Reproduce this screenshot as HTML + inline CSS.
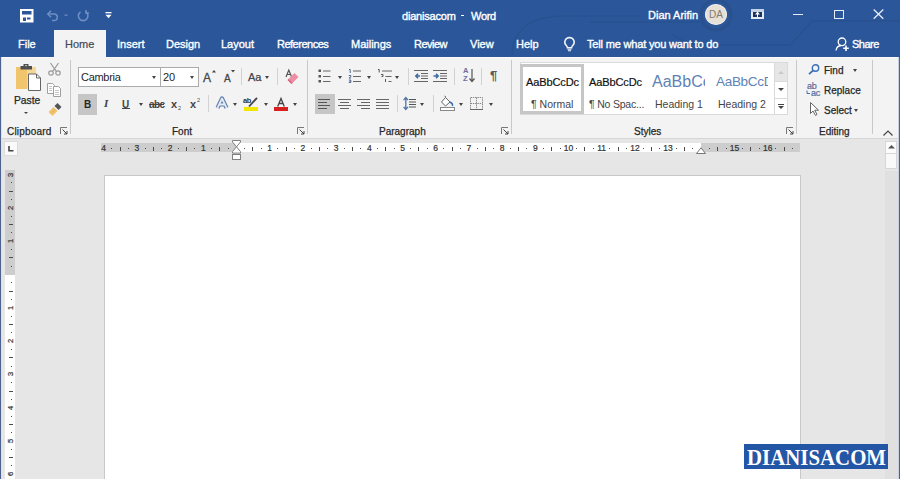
<!DOCTYPE html>
<html><head><meta charset="utf-8">
<style>
*{margin:0;padding:0;box-sizing:border-box}
html,body{width:900px;height:479px;overflow:hidden;background:#E6E6E6;font-family:"Liberation Sans",sans-serif}
.a{position:absolute;white-space:nowrap}
#top{position:absolute;left:0;top:0;width:900px;height:57px;background:#2B579A;overflow:hidden}
.tw{color:#fff;font-size:11px;-webkit-text-stroke:0.35px #fff}
.tab{color:#fff;font-size:11px;top:38px;-webkit-text-stroke:0.35px #fff}
#ribbon{position:absolute;left:0;top:57px;width:900px;height:82px;background:#F3F3F3;border-bottom:1px solid #D6D6D6}
.rt{color:#262626;font-size:10px;-webkit-text-stroke:0.25px #262626}
.lbl{color:#262626;font-size:10px;top:126px;-webkit-text-stroke:0.25px #262626}
.vsep{position:absolute;width:1px;background:#D2D2D2}
.gsep{position:absolute;width:1px;background:#C8C8C8;top:60px;height:74px}
.rn{font-size:8.5px;color:#333;-webkit-text-stroke:0.2px #333;text-align:center;line-height:10px}
.dd{position:absolute;width:0;height:0;border-left:2px solid transparent;border-right:2px solid transparent;border-top:2px solid #444}
svg{position:absolute;overflow:visible}
</style></head><body>
<div id="top">
  <!-- circuit pattern -->
  <svg style="left:0;top:0" width="900" height="57">
    <g fill="none" stroke="#28528F" stroke-width="1.5">
      <path d="M900 21 L812 21 L790 45 L700 45 C690 45 680 40 672 34"/>
      <path d="M512 57 C512 30 530 16 565 16 L640 16"/>
      <path d="M590 22 L700 22"/>
    </g>
    <circle cx="716" cy="15" r="15" fill="none" stroke="#28518D" stroke-width="3"/>
  </svg>
  <!-- QAT -->
  <svg style="left:20px;top:9px" width="14" height="14" viewBox="0 0 14 14">
    <rect x="0" y="0" width="13.5" height="13.5" fill="#fff"/>
    <rect x="2" y="2" width="9.5" height="3.5" fill="#2B579A"/>
    <rect x="3" y="8.5" width="3" height="3.5" fill="#2B579A"/>
    <rect x="7" y="8.5" width="3.5" height="2" fill="#2B579A"/>
  </svg>
  <svg style="left:46px;top:10px" width="24" height="12" viewBox="0 0 24 12">
    <path d="M2 4h6a3.3 3.3 0 0 1 0 6.6H6" fill="none" stroke="#6F8FC6" stroke-width="1.5"/>
    <path d="M5 0.8L1.8 4L5 7.2" fill="none" stroke="#6F8FC6" stroke-width="1.5"/>
    <rect x="18.5" y="4.5" width="3" height="1.2" fill="#6F8FC6"/>
  </svg>
  <svg style="left:77px;top:10px" width="13" height="12" viewBox="0 0 13 12">
    <path d="M8.8 1.8A4.8 4.8 0 1 1 3.5 1.8" fill="none" stroke="#6F8FC6" stroke-width="1.6"/>
    <path d="M9 0v3h3" fill="none" stroke="#6F8FC6" stroke-width="1.5"/>
  </svg>
  <svg style="left:105px;top:12px" width="7" height="7" viewBox="0 0 7 7">
    <rect x="0.5" y="0" width="6" height="1.3" fill="#fff"/>
    <path d="M0.5 2.8h6l-3 3.5z" fill="#fff"/>
  </svg>
  <div class="a tw" style="left:402px;top:10px;letter-spacing:-0.2px">dianisacom</div>
  <div class="a" style="left:461px;top:15px;width:3px;height:1px;background:#fff"></div>
  <div class="a tw" style="left:471px;top:10px;letter-spacing:-0.3px">Word</div>
  <div class="a tw" style="left:648px;top:9px">Dian Arifin</div>
  <div class="a" style="left:705px;top:4px;width:22px;height:21px;border-radius:50%;background:#E6E0D7;border:1px solid #F2F0EC;color:#857B6E;font-size:10px;line-height:19px;text-align:center">DA</div>
  <svg style="left:751px;top:9px" width="13" height="10" viewBox="0 0 13 10">
    <rect x="0" y="0" width="13" height="10" fill="#E4EBF5"/>
    <rect x="0" y="0" width="13" height="3" fill="#C5D2E6"/>
    <rect x="2" y="3" width="9" height="5" fill="#1C335F"/>
    <path d="M6.5 2.5L4 5.5h5z" fill="#fff"/><rect x="6" y="5" width="1" height="3" fill="#fff"/>
  </svg>
  <div class="a" style="left:793px;top:14px;width:10px;height:1px;background:#E6EDF7"></div>
  <div class="a" style="left:834px;top:9.5px;width:9.5px;height:9.5px;border:1.3px solid #E6EDF7"></div>
  <svg style="left:873px;top:9px" width="11" height="10" viewBox="0 0 11 10">
    <path d="M0.7 0.5L10.3 9.8M10.3 0.5L0.7 9.8" stroke="#E6EDF7" stroke-width="1.3"/>
  </svg>
  <!-- tabs -->
  <div class="a" style="left:54px;top:30px;width:52px;height:27px;background:#F3F3F3"></div>
  <div class="a tab" style="left:18px">File</div>
  <div class="a tab" style="left:65px;color:#3F4756;-webkit-text-stroke:0.2px #3F4756">Home</div>
  <div class="a tab" style="left:117px">Insert</div>
  <div class="a tab" style="left:166px">Design</div>
  <div class="a tab" style="left:221px">Layout</div>
  <div class="a tab" style="left:277px;letter-spacing:-0.5px">References</div>
  <div class="a tab" style="left:351px">Mailings</div>
  <div class="a tab" style="left:414px;letter-spacing:-0.5px">Review</div>
  <div class="a tab" style="left:470px">View</div>
  <div class="a tab" style="left:516px">Help</div>
  <svg style="left:563px;top:36px" width="13" height="16" viewBox="0 0 13 16">
    <path d="M6.5 1.5a4.7 4.7 0 0 0-3 8.3c.6.6.9 1.2.9 2h4.2c0-.8.3-1.4.9-2a4.7 4.7 0 0 0-3-8.3z" fill="none" stroke="#F0F4FA" stroke-width="1.5"/>
    <path d="M4.5 13.3h4M5 14.8h3" stroke="#F0F4FA" stroke-width="1.1"/>
  </svg>
  <div class="a tab" style="left:587px;letter-spacing:-0.17px">Tell me what you want to do</div>
  <svg style="left:835px;top:37px" width="15" height="15" viewBox="0 0 15 15">
    <circle cx="7" cy="4.8" r="3.8" fill="none" stroke="#fff" stroke-width="1.3"/>
    <path d="M1 13.5c.5-3 2.5-4.8 5-5" fill="none" stroke="#fff" stroke-width="1.3"/>
    <path d="M11 8.5v5.5M8.2 11.2h5.6" stroke="#fff" stroke-width="1.6"/>
  </svg>
  <div class="a tab" style="left:852px;letter-spacing:-0.5px">Share</div>
</div>

<div id="ribbon"></div>
<div class="a" style="left:0;top:57px;width:54px;height:1px;background:#FBFBFB"></div>
<div class="a" style="left:106px;top:57px;width:794px;height:1px;background:#FBFBFB"></div>

<!-- RIBBON CONTENT -->
<!-- Clipboard group -->
<svg style="left:16px;top:63px" width="26" height="29" viewBox="0 0 26 29">
  <rect x="0" y="4" width="19.5" height="22" fill="#F1C56C"/>
  <rect x="11" y="4" width="8.5" height="22" fill="#F5D699"/>
  <rect x="4.5" y="3" width="11.5" height="3.5" fill="#505050"/>
  <rect x="7.5" y="1" width="5" height="3" fill="#505050"/>
  <rect x="9.3" y="2" width="1.5" height="1.2" fill="#ddd"/>
  <path d="M12.5 11h8l4 4v12.5h-12z" fill="#fff" stroke="#666" stroke-width="1"/>
  <path d="M20.5 11v4h4" fill="none" stroke="#666" stroke-width="1"/>
</svg>
<div class="a rt" style="left:14px;top:95px;font-size:10.3px">Paste</div>
<div class="dd" style="left:24px;top:112px;border-width:2px 2px 0 2px"></div>
<svg style="left:48px;top:62px" width="13" height="14" viewBox="0 0 13 14">
  <path d="M2.5 1L8.3 9.3M10.5 1L4.7 9.3" stroke="#9A9A9A" stroke-width="1.2" fill="none"/>
  <circle cx="3" cy="11" r="2.2" fill="none" stroke="#9A9A9A" stroke-width="1.2"/>
  <circle cx="10" cy="11" r="2.2" fill="none" stroke="#9A9A9A" stroke-width="1.2"/>
</svg>
<svg style="left:47px;top:83px" width="14" height="14" viewBox="0 0 14 14">
  <path d="M0.5 0.5h5l2 2v8h-7z" fill="#fff" stroke="#A0A0A0" stroke-width="1"/>
  <path d="M6.5 3.5h5l2 2v8h-7z" fill="#fff" stroke="#A0A0A0" stroke-width="1"/>
  <path d="M2 3.5h3M2 5.5h3M2 7.5h3M8 7.5h4M8 9.5h4M8 11.5h4" stroke="#B8B8B8" stroke-width="0.8"/>
</svg>
<svg style="left:48px;top:103px" width="14" height="13" viewBox="0 0 14 13">
  <path d="M0.5 9L5.5 4L9.5 8L4.5 13z" fill="#EFC26B"/>
  <path d="M4 9.5L7 6.5" stroke="#D9A94F" stroke-width="0.8"/>
  <path d="M6.5 3L9.5 0L13.5 4L10.5 7z" fill="#555"/>
</svg>
<div class="a lbl" style="left:7px;letter-spacing:0.2px">Clipboard</div>
<svg style="left:60px;top:127px" width="8" height="8" viewBox="0 0 8 8">
  <path d="M0.5 7V0.5H7" fill="none" stroke="#777" stroke-width="1"/>
  <path d="M2.5 2.5L7 7M7 4v3H4" fill="none" stroke="#444" stroke-width="1"/>
</svg>
<div class="gsep" style="left:70px"></div>
<!-- Font group -->
<div class="a" style="left:78px;top:67px;width:121px;height:20px;background:#fff;border:1px solid #ABABAB"></div>
<div class="a" style="left:160px;top:67px;width:1px;height:20px;background:#ABABAB"></div>
<div class="a" style="left:81px;top:71px;font-size:11px;color:#262626;letter-spacing:-0.3px">Cambria</div>
<div class="dd" style="left:152px;top:76px;border-width:3px 2px 0 2px"></div>
<div class="a" style="left:163px;top:71px;font-size:11px;color:#262626">20</div>
<div class="dd" style="left:190px;top:76px;border-width:3px 2px 0 2px"></div>
<!-- grow/shrink -->
<div class="a" style="left:203px;top:71px;font-size:12px;color:#444;-webkit-text-stroke:0.3px #444">A</div>
<svg style="left:212px;top:70px" width="4" height="3"><path d="M0 2.5L2 0L4 2.5z" fill="#444"/></svg>
<div class="a" style="left:224px;top:73px;font-size:10px;color:#444;-webkit-text-stroke:0.3px #444">A</div>
<svg style="left:231px;top:70px" width="4" height="3"><path d="M0 0L2 2.5L4 0z" fill="#444"/></svg>
<div class="vsep" style="left:241px;top:68px;height:17px"></div>
<div class="a" style="left:248px;top:71px;font-size:11px;color:#444;-webkit-text-stroke:0.25px #444">Aa</div>
<div class="dd" style="left:265px;top:76px;border-width:3px 2px 0 2px"></div>
<div class="vsep" style="left:277px;top:68px;height:17px"></div>
<svg style="left:285px;top:69px" width="15" height="14" viewBox="0 0 15 14">
  <path d="M1 8L3.8 1L6.6 8M1.9 5.5h3.8" fill="none" stroke="#555" stroke-width="1.2"/>
  <path d="M3 10.5L9.5 4L13.5 8L7 14.5z" fill="#EC8FA2"/>
  <path d="M3 10.5L7 14.5" stroke="#D9587A" stroke-width="1.5"/>
</svg>
<!-- row 2 -->
<div class="a" style="left:78px;top:94px;width:19px;height:21px;background:#C6C6C6"></div>
<div class="a" style="left:84px;top:99px;font-size:10px;font-weight:bold;color:#262626">B</div>
<div class="a" style="left:104px;top:97px;font-size:11px;font-style:italic;font-weight:bold;color:#444;font-family:'Liberation Serif',serif">I</div>
<div class="a" style="left:122px;top:99px;font-size:10px;font-weight:bold;color:#444">U</div>
<div class="a" style="left:122px;top:108px;width:8px;height:1px;background:#444"></div>
<div class="dd" style="left:139px;top:103px;border-width:3px 2px 0 2px"></div>
<div class="a" style="left:149px;top:99px;font-size:10px;color:#444;letter-spacing:-0.6px;font-weight:bold">abc</div>
<div class="a" style="left:149px;top:104px;width:15px;height:1px;background:#444"></div>
<div class="a" style="left:171px;top:98px;font-size:11px;font-weight:bold;color:#444">x</div>
<div class="a" style="left:178px;top:105px;font-size:5.5px;color:#444">2</div>
<div class="a" style="left:190px;top:98px;font-size:11px;font-weight:bold;color:#444">x</div>
<div class="a" style="left:197px;top:97px;font-size:5.5px;color:#444">2</div>
<div class="vsep" style="left:208px;top:95px;height:17px"></div>
<svg style="left:216px;top:97px" width="12" height="12" viewBox="0 0 12 12">
  <path d="M1.5 10.8L6 1.5L10.5 10.8M3.4 7.5h5.2" fill="none" stroke="#6482AE" stroke-width="4.2" stroke-linejoin="round"/>
  <path d="M1.5 10.8L6 1.5L10.5 10.8M3.4 7.5h5.2" fill="none" stroke="#E4EBF5" stroke-width="1.8" stroke-linejoin="round"/>
</svg>
<div class="dd" style="left:233px;top:103px;border-width:3px 2px 0 2px"></div>
<div class="a" style="left:243px;top:96px;font-size:7.5px;color:#333;font-weight:bold;letter-spacing:-0.3px">ab</div>
<svg style="left:247px;top:97px" width="11" height="10" viewBox="0 0 11 10">
  <path d="M10 0.8L2 9.5" stroke="#444" stroke-width="1.8"/>
</svg>
<div class="a" style="left:244px;top:107px;width:14px;height:4px;background:#F2E600"></div>
<div class="dd" style="left:264px;top:103px;border-width:3px 2px 0 2px"></div>
<svg style="left:277px;top:98px" width="8" height="9" viewBox="0 0 8 9">
  <path d="M0.7 8.5L4 0.5L7.3 8.5M2 5.5h4" fill="none" stroke="#444" stroke-width="1.3"/>
</svg>
<div class="a" style="left:274px;top:107px;width:14px;height:4px;background:#D8201F"></div>
<div class="dd" style="left:293px;top:103px;border-width:3px 2px 0 2px"></div>
<div class="a lbl" style="left:172px">Font</div>
<svg style="left:297px;top:127px" width="8" height="8" viewBox="0 0 8 8">
  <path d="M0.5 7V0.5H7" fill="none" stroke="#777" stroke-width="1"/>
  <path d="M2.5 2.5L7 7M7 4v3H4" fill="none" stroke="#444" stroke-width="1"/>
</svg>
<div class="gsep" style="left:307px"></div>
<!-- Paragraph group -->
<svg style="left:318px;top:69px" width="14" height="14" viewBox="0 0 14 14">
  <g fill="#555"><rect x="0.5" y="0.5" width="2.5" height="2.5"/><rect x="0.5" y="6" width="2.5" height="2.5"/><rect x="0.5" y="11" width="2.5" height="2.5"/></g>
  <g stroke="#666" stroke-width="1"><path d="M5 2h7.5M5 7.5h7.5M5 12.5h7.5"/></g>
</svg>
<div class="dd" style="left:338px;top:76px;border-width:3px 2px 0 2px"></div>
<svg style="left:348px;top:68px" width="14" height="15" viewBox="0 0 14 15">
  <g stroke="#4D6890" stroke-width="1" fill="none"><path d="M1 1.5h1.2v3.5"/><path d="M0.8 7.5h2v1.3l-1.8 1.2h2"/><path d="M0.8 12h2v1.2h-1.5M2.8 13.2v1.3H0.8"/></g>
  <g stroke="#666" stroke-width="1"><path d="M5 3h8M5 8.5h8M5 13.5h8"/></g>
</svg>
<div class="dd" style="left:367px;top:76px;border-width:3px 2px 0 2px"></div>
<svg style="left:377px;top:68px" width="15" height="15" viewBox="0 0 15 15">
  <g stroke="#555" stroke-width="1" fill="none"><path d="M1 1.5h1.2v3"/><path d="M4 6.5h2v2H4.5"/><path d="M8.5 11v3"/></g>
  <g stroke="#666" stroke-width="1"><path d="M5 3h10M8.5 8.5h6M11.5 13.5h3"/></g>
</svg>
<div class="dd" style="left:395px;top:76px;border-width:3px 2px 0 2px"></div>
<div class="vsep" style="left:408px;top:68px;height:17px"></div>
<svg style="left:414px;top:69px" width="15" height="13" viewBox="0 0 15 13">
  <g stroke="#666" stroke-width="1"><path d="M0 1.5h14M7 4.5h7M7 7h7M7 9.5h7M0 12.5h14"/></g>
  <path d="M6 7H1.8M4 4.8L1.8 7L4 9.2" fill="none" stroke="#3F6A9E" stroke-width="1.5"/>
</svg>
<svg style="left:433px;top:69px" width="15" height="13" viewBox="0 0 15 13">
  <g stroke="#666" stroke-width="1"><path d="M0 1.5h14M7 4.5h7M7 7h7M7 9.5h7M0 12.5h14"/></g>
  <path d="M0.5 7H5M3 4.8L5.2 7L3 9.2" fill="none" stroke="#3F6A9E" stroke-width="1.5"/>
</svg>
<div class="vsep" style="left:454px;top:68px;height:17px"></div>
<div class="a" style="left:463px;top:67px;font-size:7.5px;color:#6A6F9E;font-weight:bold;line-height:8px">A<br>Z</div>
<svg style="left:469px;top:69px" width="6" height="14" viewBox="0 0 6 14">
  <path d="M3 0v12M0.5 9.5L3 12.5L5.5 9.5" fill="none" stroke="#555" stroke-width="1.2"/>
</svg>
<div class="vsep" style="left:481px;top:68px;height:17px"></div>
<div class="a" style="left:490px;top:68px;font-size:13px;color:#5A5A5A;font-weight:bold">&para;</div>
<!-- row 2 -->
<div class="a" style="left:315px;top:94px;width:20px;height:20px;background:#C6C6C6"></div>
<svg style="left:318px;top:98px" width="13" height="11" viewBox="0 0 13 11">
  <g stroke="#555" stroke-width="1.1"><path d="M0 1.5h12M0 4.5h9M0 7.5h12M0 10.5h9"/></g>
</svg>
<svg style="left:338px;top:98px" width="13" height="11" viewBox="0 0 13 11">
  <g stroke="#666" stroke-width="1.1"><path d="M0 1.5h13M2 4.5h9M0 7.5h13M2 10.5h9"/></g>
</svg>
<svg style="left:357px;top:98px" width="13" height="11" viewBox="0 0 13 11">
  <g stroke="#666" stroke-width="1.1"><path d="M0 1.5h13M4 4.5h9M0 7.5h13M4 10.5h9"/></g>
</svg>
<svg style="left:376px;top:98px" width="13" height="11" viewBox="0 0 13 11">
  <g stroke="#666" stroke-width="1.1"><path d="M0 1.5h13M0 4.5h13M0 7.5h13M0 10.5h13"/></g>
</svg>
<div class="vsep" style="left:397px;top:95px;height:17px"></div>
<svg style="left:403px;top:96px" width="14" height="15" viewBox="0 0 14 15">
  <path d="M2.8 2v11M0.6 4.2L2.8 1.5L5 4.2M0.6 10.8L2.8 13.5L5 10.8" fill="none" stroke="#4F76A8" stroke-width="1.3"/>
  <g stroke="#555" stroke-width="1"><path d="M6 3.5h7M6 6h7M6 8.5h7M6 11h7"/></g>
</svg>
<div class="dd" style="left:420px;top:103px;border-width:3px 2px 0 2px"></div>
<div class="vsep" style="left:433px;top:95px;height:17px"></div>
<svg style="left:440px;top:96px" width="15" height="15" viewBox="0 0 15 15">
  <path d="M5.5 1.5L1.5 6L5.5 10L10 6z" fill="#fff" stroke="#666" stroke-width="1"/>
  <path d="M6 1L4.5 0" stroke="#666" stroke-width="1"/>
  <path d="M10 6c2 1 3 2 2.5 4" fill="none" stroke="#3A6FB5" stroke-width="1.4"/>
  <rect x="0.5" y="11.5" width="14" height="3" fill="#fff" stroke="#888" stroke-width="1"/>
</svg>
<div class="dd" style="left:459px;top:103px;border-width:3px 2px 0 2px"></div>
<svg style="left:470px;top:97px" width="13" height="13" viewBox="0 0 13 13">
  <path d="M0.5 0.5h12v12h-12zM6.5 0.5v12M0.5 6.5h12" fill="none" stroke="#8A8A8A" stroke-width="1" stroke-dasharray="1.5 0.8"/>
  <path d="M0 12.5h13" stroke="#666" stroke-width="1"/>
</svg>
<div class="dd" style="left:489px;top:103px;border-width:3px 2px 0 2px"></div>
<div class="a lbl" style="left:379px">Paragraph</div>
<svg style="left:501px;top:127px" width="8" height="8" viewBox="0 0 8 8">
  <path d="M0.5 7V0.5H7" fill="none" stroke="#777" stroke-width="1"/>
  <path d="M2.5 2.5L7 7M7 4v3H4" fill="none" stroke="#444" stroke-width="1"/>
</svg>
<div class="gsep" style="left:511px"></div>
<!-- Styles group -->
<div class="a" style="left:520px;top:62px;width:268px;height:53px;background:#fff;border:1px solid #DADADA"></div>
<div class="a" style="left:520px;top:64px;width:64px;height:50px;border:3px solid #C6C6C6;background:#fff"></div>
<div class="a" style="left:526px;top:76px;font-size:11px;color:#111;letter-spacing:-0.1px;-webkit-text-stroke:0.2px #111">AaBbCcDc</div>
<div class="a" style="left:531px;top:98px;font-size:10.5px;color:#444">&para; Normal</div>
<div class="a" style="left:589px;top:76px;font-size:11px;color:#111;letter-spacing:-0.1px;-webkit-text-stroke:0.2px #111">AaBbCcDc</div>
<div class="a" style="left:589px;top:98px;font-size:10.5px;color:#444;letter-spacing:-0.2px">&para; No Spac...</div>
<div class="a" style="left:652px;top:73px;font-size:16px;color:#5F82B5;width:53px;overflow:hidden">AaBbCc</div>
<div class="a" style="left:655px;top:98px;font-size:10.5px;color:#444">Heading 1</div>
<div class="a" style="left:716px;top:74px;font-size:13.5px;color:#5F82B5;width:52px;overflow:hidden;letter-spacing:-0.3px">AaBbCcD</div>
<div class="a" style="left:718px;top:98px;font-size:10.5px;color:#444">Heading 2</div>
<div class="a" style="left:774px;top:62px;width:14px;height:53px;background:#fff;border:1px solid #DADADA"></div>
<div class="a" style="left:775px;top:63px;width:12px;height:18px;background:#E6E6E6"></div>
<svg style="left:778px;top:71px" width="6" height="3"><path d="M0 3L3 0L6 3z" fill="#C8C8C8"/></svg>
<div class="a" style="left:775px;top:81px;width:12px;height:1px;background:#DADADA"></div>
<svg style="left:778px;top:88px" width="6" height="3"><path d="M0 0L3 3L6 0z" fill="#444"/></svg>
<div class="a" style="left:775px;top:98px;width:12px;height:1px;background:#DADADA"></div>
<svg style="left:778px;top:104px" width="6" height="5"><path d="M0 0.5h6" stroke="#444" stroke-width="1"/><path d="M0 2L3 5L6 2z" fill="#444"/></svg>
<div class="a lbl" style="left:634px">Styles</div>
<svg style="left:786px;top:127px" width="8" height="8" viewBox="0 0 8 8">
  <path d="M0.5 7V0.5H7" fill="none" stroke="#777" stroke-width="1"/>
  <path d="M2.5 2.5L7 7M7 4v3H4" fill="none" stroke="#444" stroke-width="1"/>
</svg>
<div class="gsep" style="left:796px"></div>
<!-- Editing group -->
<svg style="left:808px;top:64px" width="12" height="11" viewBox="0 0 12 11">
  <circle cx="7.5" cy="4" r="3.2" fill="none" stroke="#3A6FB5" stroke-width="1.4"/>
  <path d="M5.2 6.3L1 10.2" stroke="#3A6FB5" stroke-width="1.8"/>
</svg>
<div class="a rt" style="left:824px;top:65px">Find</div>
<div class="dd" style="left:853px;top:69px;border-width:3px 2px 0 2px"></div>
<div class="a" style="left:807px;top:82px;font-size:9px;color:#63679B;line-height:8px;-webkit-text-stroke:0.2px #63679B;letter-spacing:-0.3px">ab</div>
<div class="a" style="left:811px;top:89px;font-size:9px;color:#4A6FA8;line-height:8px;-webkit-text-stroke:0.2px #4A6FA8;letter-spacing:-0.3px">ac</div>
<svg style="left:806px;top:90px" width="5" height="5" viewBox="0 0 5 5"><path d="M1 0.5v3h3" fill="none" stroke="#4A6FA8" stroke-width="1"/></svg>
<div class="a rt" style="left:824px;top:85px">Replace</div>
<svg style="left:810px;top:102px" width="9" height="14" viewBox="0 0 9 14">
  <path d="M0.5 0.5v11l2.5-2.5l2.5 4.5l1.5-1l-2.3-4.3h3.8z" fill="#fff" stroke="#666" stroke-width="1"/>
</svg>
<div class="a rt" style="left:824px;top:105px">Select</div>
<div class="dd" style="left:854px;top:109px;border-width:3px 2px 0 2px"></div>
<div class="a lbl" style="left:819px">Editing</div>
<div class="gsep" style="left:872px"></div>
<svg style="left:883px;top:130px" width="10" height="6" viewBox="0 0 10 6">
  <path d="M0.5 5.5L5 1L9.5 5.5" fill="none" stroke="#444" stroke-width="1.2"/>
</svg>


<!-- ruler row -->
<div class="a" style="left:4px;top:141px;width:14px;height:15px;background:#FAFAFA;border:1px solid #DCDCDC"></div>
<svg style="left:8px;top:146px" width="6" height="6"><path d="M1 0v4.8H5.5" fill="none" stroke="#444" stroke-width="1.6"/></svg>
<div class="a" style="left:101px;top:143px;width:136px;height:9px;background:#CDCDCD"></div>
<div class="a" style="left:237px;top:143px;width:464px;height:9px;background:#FFFFFF"></div>
<div class="a" style="left:701px;top:143px;width:99px;height:9px;background:#CDCDCD"></div>
<div class="a rn" style="left:100.7px;top:143px;width:6px">4</div>
<div class="a" style="left:111px;top:148px;width:1px;height:1px;background:#4A4A4A"></div>
<div class="a" style="left:120px;top:147px;width:1px;height:4px;background:#4A4A4A"></div>
<div class="a" style="left:128px;top:148px;width:1px;height:1px;background:#4A4A4A"></div>
<div class="a rn" style="left:133.9px;top:143px;width:6px">3</div>
<div class="a" style="left:145px;top:148px;width:1px;height:1px;background:#4A4A4A"></div>
<div class="a" style="left:153px;top:147px;width:1px;height:4px;background:#4A4A4A"></div>
<div class="a" style="left:161px;top:148px;width:1px;height:1px;background:#4A4A4A"></div>
<div class="a rn" style="left:167.1px;top:143px;width:6px">2</div>
<div class="a" style="left:178px;top:148px;width:1px;height:1px;background:#4A4A4A"></div>
<div class="a" style="left:186px;top:147px;width:1px;height:4px;background:#4A4A4A"></div>
<div class="a" style="left:194px;top:148px;width:1px;height:1px;background:#4A4A4A"></div>
<div class="a rn" style="left:200.3px;top:143px;width:6px">1</div>
<div class="a" style="left:211px;top:148px;width:1px;height:1px;background:#4A4A4A"></div>
<div class="a" style="left:219px;top:147px;width:1px;height:4px;background:#4A4A4A"></div>
<div class="a" style="left:228px;top:148px;width:1px;height:1px;background:#4A4A4A"></div>
<div class="a" style="left:244px;top:148px;width:1px;height:1px;background:#4A4A4A"></div>
<div class="a" style="left:252px;top:147px;width:1px;height:4px;background:#4A4A4A"></div>
<div class="a" style="left:261px;top:148px;width:1px;height:1px;background:#4A4A4A"></div>
<div class="a rn" style="left:266.7px;top:143px;width:6px">1</div>
<div class="a" style="left:277px;top:148px;width:1px;height:1px;background:#4A4A4A"></div>
<div class="a" style="left:286px;top:147px;width:1px;height:4px;background:#4A4A4A"></div>
<div class="a" style="left:294px;top:148px;width:1px;height:1px;background:#4A4A4A"></div>
<div class="a rn" style="left:299.9px;top:143px;width:6px">2</div>
<div class="a" style="left:311px;top:148px;width:1px;height:1px;background:#4A4A4A"></div>
<div class="a" style="left:319px;top:147px;width:1px;height:4px;background:#4A4A4A"></div>
<div class="a" style="left:327px;top:148px;width:1px;height:1px;background:#4A4A4A"></div>
<div class="a rn" style="left:333.1px;top:143px;width:6px">3</div>
<div class="a" style="left:344px;top:148px;width:1px;height:1px;background:#4A4A4A"></div>
<div class="a" style="left:352px;top:147px;width:1px;height:4px;background:#4A4A4A"></div>
<div class="a" style="left:360px;top:148px;width:1px;height:1px;background:#4A4A4A"></div>
<div class="a rn" style="left:366.3px;top:143px;width:6px">4</div>
<div class="a" style="left:377px;top:148px;width:1px;height:1px;background:#4A4A4A"></div>
<div class="a" style="left:385px;top:147px;width:1px;height:4px;background:#4A4A4A"></div>
<div class="a" style="left:394px;top:148px;width:1px;height:1px;background:#4A4A4A"></div>
<div class="a rn" style="left:399.5px;top:143px;width:6px">5</div>
<div class="a" style="left:410px;top:148px;width:1px;height:1px;background:#4A4A4A"></div>
<div class="a" style="left:418px;top:147px;width:1px;height:4px;background:#4A4A4A"></div>
<div class="a" style="left:427px;top:148px;width:1px;height:1px;background:#4A4A4A"></div>
<div class="a rn" style="left:432.7px;top:143px;width:6px">6</div>
<div class="a" style="left:443px;top:148px;width:1px;height:1px;background:#4A4A4A"></div>
<div class="a" style="left:452px;top:147px;width:1px;height:4px;background:#4A4A4A"></div>
<div class="a" style="left:460px;top:148px;width:1px;height:1px;background:#4A4A4A"></div>
<div class="a rn" style="left:465.9px;top:143px;width:6px">7</div>
<div class="a" style="left:477px;top:148px;width:1px;height:1px;background:#4A4A4A"></div>
<div class="a" style="left:485px;top:147px;width:1px;height:4px;background:#4A4A4A"></div>
<div class="a" style="left:493px;top:148px;width:1px;height:1px;background:#4A4A4A"></div>
<div class="a rn" style="left:499.1px;top:143px;width:6px">8</div>
<div class="a" style="left:510px;top:148px;width:1px;height:1px;background:#4A4A4A"></div>
<div class="a" style="left:518px;top:147px;width:1px;height:4px;background:#4A4A4A"></div>
<div class="a" style="left:526px;top:148px;width:1px;height:1px;background:#4A4A4A"></div>
<div class="a rn" style="left:532.3px;top:143px;width:6px">9</div>
<div class="a" style="left:543px;top:148px;width:1px;height:1px;background:#4A4A4A"></div>
<div class="a" style="left:551px;top:147px;width:1px;height:4px;background:#4A4A4A"></div>
<div class="a" style="left:560px;top:148px;width:1px;height:1px;background:#4A4A4A"></div>
<div class="a rn" style="left:563.0px;top:143px;width:11px">10</div>
<div class="a" style="left:576px;top:148px;width:1px;height:1px;background:#4A4A4A"></div>
<div class="a" style="left:584px;top:147px;width:1px;height:4px;background:#4A4A4A"></div>
<div class="a" style="left:593px;top:148px;width:1px;height:1px;background:#4A4A4A"></div>
<div class="a rn" style="left:596.2px;top:143px;width:11px">11</div>
<div class="a" style="left:609px;top:148px;width:1px;height:1px;background:#4A4A4A"></div>
<div class="a" style="left:618px;top:147px;width:1px;height:4px;background:#4A4A4A"></div>
<div class="a" style="left:626px;top:148px;width:1px;height:1px;background:#4A4A4A"></div>
<div class="a rn" style="left:629.4px;top:143px;width:11px">12</div>
<div class="a" style="left:643px;top:148px;width:1px;height:1px;background:#4A4A4A"></div>
<div class="a" style="left:651px;top:147px;width:1px;height:4px;background:#4A4A4A"></div>
<div class="a" style="left:659px;top:148px;width:1px;height:1px;background:#4A4A4A"></div>
<div class="a rn" style="left:662.6px;top:143px;width:11px">13</div>
<div class="a" style="left:676px;top:148px;width:1px;height:1px;background:#4A4A4A"></div>
<div class="a" style="left:684px;top:147px;width:1px;height:4px;background:#4A4A4A"></div>
<div class="a" style="left:692px;top:148px;width:1px;height:1px;background:#4A4A4A"></div>
<div class="a" style="left:709px;top:148px;width:1px;height:1px;background:#4A4A4A"></div>
<div class="a" style="left:717px;top:147px;width:1px;height:4px;background:#4A4A4A"></div>
<div class="a" style="left:726px;top:148px;width:1px;height:1px;background:#4A4A4A"></div>
<div class="a rn" style="left:729.0px;top:143px;width:11px">15</div>
<div class="a" style="left:742px;top:148px;width:1px;height:1px;background:#4A4A4A"></div>
<div class="a" style="left:750px;top:147px;width:1px;height:4px;background:#4A4A4A"></div>
<div class="a" style="left:759px;top:148px;width:1px;height:1px;background:#4A4A4A"></div>
<div class="a rn" style="left:762.2px;top:143px;width:11px">16</div>
<div class="a" style="left:775px;top:148px;width:1px;height:1px;background:#4A4A4A"></div>
<div class="a" style="left:784px;top:147px;width:1px;height:4px;background:#4A4A4A"></div>
<div class="a" style="left:792px;top:148px;width:1px;height:1px;background:#4A4A4A"></div>
<svg style="left:232px;top:140px" width="10" height="20" viewBox="0 0 10 20">
<path d="M0.5 0.5h8v1.5l-4 4.8l4 4.8v1.5h-8v-1.5l4-4.8l-4-4.8z" fill="#fff" stroke="#808080" stroke-width="1"/>
<rect x="0.5" y="14.5" width="8" height="5" fill="#fff" stroke="#808080" stroke-width="1"/>
</svg>
<svg style="left:696px;top:147px" width="10" height="7" viewBox="0 0 10 7">
<path d="M0.5 6.5L5 0.8L9.5 6.5z" fill="#fff" stroke="#777" stroke-width="1"/>
</svg>

<!-- vertical ruler -->
<div class="a" style="left:5px;top:170px;width:10px;height:105px;background:#CDCDCD"></div>
<div class="a" style="left:5px;top:275px;width:10px;height:204px;background:#FFFFFF"></div>
<div class="a rn" style="left:6px;font-size:7.5px;top:169.6px;width:10px;height:10px;line-height:10px;text-align:center;transform:rotate(-90deg)">3</div>
<div class="a" style="left:11px;top:182px;width:1px;height:1px;background:#4A4A4A"></div>
<div class="a" style="left:9px;top:191px;width:4px;height:1px;background:#4A4A4A"></div>
<div class="a" style="left:11px;top:199px;width:1px;height:1px;background:#4A4A4A"></div>
<div class="a rn" style="left:6px;font-size:7.5px;top:202.9px;width:10px;height:10px;line-height:10px;text-align:center;transform:rotate(-90deg)">2</div>
<div class="a" style="left:11px;top:216px;width:1px;height:1px;background:#4A4A4A"></div>
<div class="a" style="left:9px;top:224px;width:4px;height:1px;background:#4A4A4A"></div>
<div class="a" style="left:11px;top:232px;width:1px;height:1px;background:#4A4A4A"></div>
<div class="a rn" style="left:6px;font-size:7.5px;top:236.2px;width:10px;height:10px;line-height:10px;text-align:center;transform:rotate(-90deg)">1</div>
<div class="a" style="left:11px;top:249px;width:1px;height:1px;background:#4A4A4A"></div>
<div class="a" style="left:9px;top:257px;width:4px;height:1px;background:#4A4A4A"></div>
<div class="a" style="left:11px;top:266px;width:1px;height:1px;background:#4A4A4A"></div>
<div class="a" style="left:11px;top:282px;width:1px;height:1px;background:#4A4A4A"></div>
<div class="a" style="left:9px;top:291px;width:4px;height:1px;background:#4A4A4A"></div>
<div class="a" style="left:11px;top:299px;width:1px;height:1px;background:#4A4A4A"></div>
<div class="a rn" style="left:6px;font-size:7.5px;top:302.8px;width:10px;height:10px;line-height:10px;text-align:center;transform:rotate(-90deg)">1</div>
<div class="a" style="left:11px;top:316px;width:1px;height:1px;background:#4A4A4A"></div>
<div class="a" style="left:9px;top:324px;width:4px;height:1px;background:#4A4A4A"></div>
<div class="a" style="left:11px;top:332px;width:1px;height:1px;background:#4A4A4A"></div>
<div class="a rn" style="left:6px;font-size:7.5px;top:336.1px;width:10px;height:10px;line-height:10px;text-align:center;transform:rotate(-90deg)">2</div>
<div class="a" style="left:11px;top:349px;width:1px;height:1px;background:#4A4A4A"></div>
<div class="a" style="left:9px;top:357px;width:4px;height:1px;background:#4A4A4A"></div>
<div class="a" style="left:11px;top:366px;width:1px;height:1px;background:#4A4A4A"></div>
<div class="a rn" style="left:6px;font-size:7.5px;top:369.4px;width:10px;height:10px;line-height:10px;text-align:center;transform:rotate(-90deg)">3</div>
<div class="a" style="left:11px;top:382px;width:1px;height:1px;background:#4A4A4A"></div>
<div class="a" style="left:9px;top:391px;width:4px;height:1px;background:#4A4A4A"></div>
<div class="a" style="left:11px;top:399px;width:1px;height:1px;background:#4A4A4A"></div>
<div class="a rn" style="left:6px;font-size:7.5px;top:402.7px;width:10px;height:10px;line-height:10px;text-align:center;transform:rotate(-90deg)">4</div>
<div class="a" style="left:11px;top:416px;width:1px;height:1px;background:#4A4A4A"></div>
<div class="a" style="left:9px;top:424px;width:4px;height:1px;background:#4A4A4A"></div>
<div class="a" style="left:11px;top:432px;width:1px;height:1px;background:#4A4A4A"></div>
<div class="a rn" style="left:6px;font-size:7.5px;top:436.0px;width:10px;height:10px;line-height:10px;text-align:center;transform:rotate(-90deg)">5</div>
<div class="a" style="left:11px;top:449px;width:1px;height:1px;background:#4A4A4A"></div>
<div class="a" style="left:9px;top:457px;width:4px;height:1px;background:#4A4A4A"></div>
<div class="a" style="left:11px;top:465px;width:1px;height:1px;background:#4A4A4A"></div>
<div class="a rn" style="left:6px;font-size:7.5px;top:469.3px;width:10px;height:10px;line-height:10px;text-align:center;transform:rotate(-90deg)">6</div>


<!-- window borders -->
<div class="a" style="left:0;top:57px;width:1px;height:422px;background:#4C6290"></div>
<div class="a" style="left:1px;top:57px;width:1px;height:422px;background:#DCE2EC"></div>
<div class="a" style="left:898px;top:57px;width:1px;height:422px;background:#C5D0E2"></div>
<div class="a" style="left:899px;top:57px;width:1px;height:422px;background:#4C6290"></div>

<!-- page -->
<div class="a" style="left:104px;top:175px;width:697px;height:304px;background:#fff;border-left:1px solid #C8C8C8;border-top:1px solid #C8C8C8;border-right:1px solid #C8C8C8"></div>

<!-- scrollbar -->
<div class="a" style="left:885px;top:171px;width:13px;height:308px;background:#E0E0E0"></div>
<div class="a" style="left:885px;top:141px;width:12px;height:13px;background:#FCFCFC;border:1px solid #D6D6D6"></div>
<svg style="left:888px;top:145px" width="7" height="4"><path d="M0 3.5L3.5 0L7 3.5z" fill="#555"/></svg>
<div class="a" style="left:885px;top:153px;width:12px;height:16px;background:#F9F9F9;border:1px solid #D6D6D6"></div>

<!-- watermark -->
<div class="a" style="left:744px;top:444px;width:144px;height:25px;background:#2456A6"></div>
<div class="a" id="wm" style="left:747px;top:442.5px;font-family:'Liberation Serif',serif;font-weight:bold;color:#fff;font-size:22.5px;line-height:30px;transform-origin:0 0;transform:scaleX(0.927)">DIANISACOM</div>
</body></html>
